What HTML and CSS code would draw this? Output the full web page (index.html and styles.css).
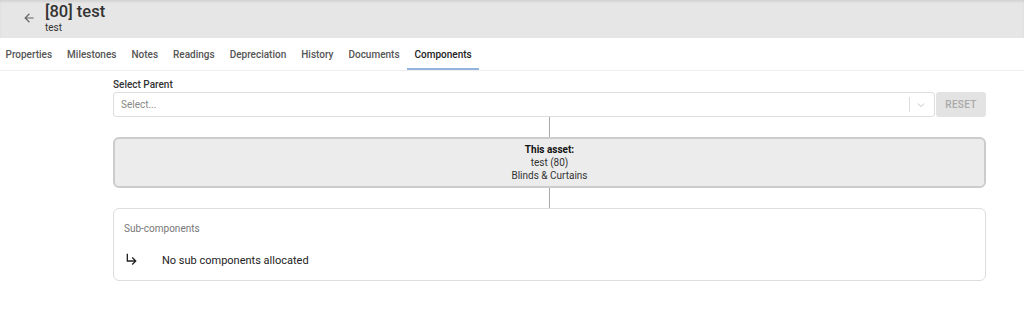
FILE: index.html
```html
<!DOCTYPE html>
<html>
<head>
  <link rel="stylesheet" href="styles.css">
</head>
<body>
  <div class="page-header">
    <button class="back-btn" aria-label="Back">
      <svg width="14" height="14" viewBox="0 0 24 24"><path d="M20 11H7.83l5.59-5.59L12 4l-8 8 8 8 1.41-1.41L7.83 13H20v-2z" fill="#666"/></svg>
    </button>
    <div class="title-block">
      <h1>[80] test</h1>
      <div class="subtitle">test</div>
    </div>
  </div>

  <nav class="tabs">
    <a class="tab">Properties</a>
    <a class="tab">Milestones</a>
    <a class="tab">Notes</a>
    <a class="tab">Readings</a>
    <a class="tab">Depreciation</a>
    <a class="tab">History</a>
    <a class="tab">Documents</a>
    <a class="tab active">Components</a>
  </nav>

  <div id="components">
    <label class="field-label">Select Parent</label>
    <div class="select-row">
      <div class="select-box">
        <span class="placeholder">Select...</span>
        <span class="select-sep"></span>
        <svg class="chevron" width="12" height="12" viewBox="0 0 20 20"><path d="M4.5 7.5 10 12.5l5.5-5" fill="none" stroke="#bbb" stroke-width="1.4"/></svg>
      </div>
      <button class="reset-btn" disabled>RESET</button>
    </div>

    <div class="connector"></div>
    <div class="asset-box">
      <strong>This asset:</strong>
      <div>test (80)</div>
      <div>Blinds &amp; Curtains</div>
    </div>
    <div class="connector"></div>

    <div class="sub-box">
      <div class="sub-title">Sub-components</div>
      <div class="sub-row">
        <svg width="16" height="16" viewBox="0 0 24 24"><path d="M19 15l-6 6-1.42-1.42L15.17 16H4V4h2v10h9.17l-3.59-3.58L13 9l6 6z" fill="#222"/></svg>
        <span>No sub components allocated</span>
      </div>
    </div>
  </div>
</body>
</html>
```

FILE: styles.css
```css
body {
  margin: 0;
  font-family: Roboto, "Liberation Sans", sans-serif;
  color: #222;
  background: #fff;
}

.page-header {
  display: flex;
  align-items: flex-start;
  height: 38px;
  background-color: #e6e6e6;
  box-shadow: inset 0 2px 2px rgba(0,0,0,0.08);
  padding-left: 22px;
  box-sizing: border-box;
}

.back-btn {
  border: none;
  background: none;
  padding: 0;
  margin-top: 11px;
  width: 14px;
  height: 14px;
  cursor: pointer;
}

.title-block {
  margin-left: 9px;
  padding-top: 1px;
}

.title-block h1 {
  margin: 0;
  font-size: 16.5px;
  font-weight: 500;
  line-height: 21px;
  color: #333;
}

.subtitle {
  font-size: 10px;
  line-height: 11px;
  color: #333;
}

.tabs {
  display: flex;
  height: 33px;
  border-bottom: 1px solid #eee;
  box-sizing: border-box;
}

.tab {
  padding: 4px 7.5px 2px;
  font-size: 10px;
  font-weight: 500;
  color: #555;
  line-height: 26px;
  cursor: pointer;
}

.tab:first-child {
  padding-left: 5.5px;
}

.tab.active {
  color: #222;
  padding-bottom: 0;
  border-bottom: 2px solid #93b4e0;
}

#components {
  display: flex;
  flex-direction: column;
  margin: 0 38px 0 113px;
  padding-top: 8px;
}

.field-label {
  font-size: 10px;
  font-weight: 500;
  color: #333;
  line-height: 11px;
  margin-bottom: 2px;
}

.select-row {
  display: flex;
  gap: 1px;
  height: 25px;
}

.select-box {
  flex: 1;
  display: flex;
  align-items: center;
  border: 1px solid #ddd;
  border-radius: 3px;
  padding-left: 7px;
}

.placeholder {
  flex: 1;
  font-size: 10px;
  color: #888;
}

.select-sep {
  width: 1px;
  height: 15px;
  background: #ddd;
}

.chevron {
  margin: 0 7px 0 5px;
}

.reset-btn {
  width: 50px;
  border: none;
  border-radius: 3px;
  background-color: #e3e3e3;
  color: #a9a9a9;
  font-family: inherit;
  font-size: 10px;
  font-weight: 500;
  letter-spacing: 0.3px;
}

.connector {
  width: 1px;
  height: 20px;
  background: #aaa;
  align-self: center;
}

.asset-box {
  background-color: #ececec;
  border: 2px solid #ccc;
  border-radius: 6px;
  height: 51px;
  box-sizing: border-box;
  display: flex;
  flex-direction: column;
  justify-content: center;
  align-items: center;
  font-size: 10px;
  line-height: 13px;
  color: #333;
}

.asset-box strong {
  color: #111;
}

.sub-box {
  border: 1px solid #ddd;
  border-radius: 6px;
  height: 73px;
  box-sizing: border-box;
  padding: 14px 10px 0;
}

.sub-title {
  font-size: 10px;
  color: #777;
}

.sub-row {
  display: flex;
  align-items: center;
  margin-top: 20px;
  gap: 22px;
  font-size: 11px;
  color: #222;
}

.sub-row svg {
  margin-top: -4px;
}
```
